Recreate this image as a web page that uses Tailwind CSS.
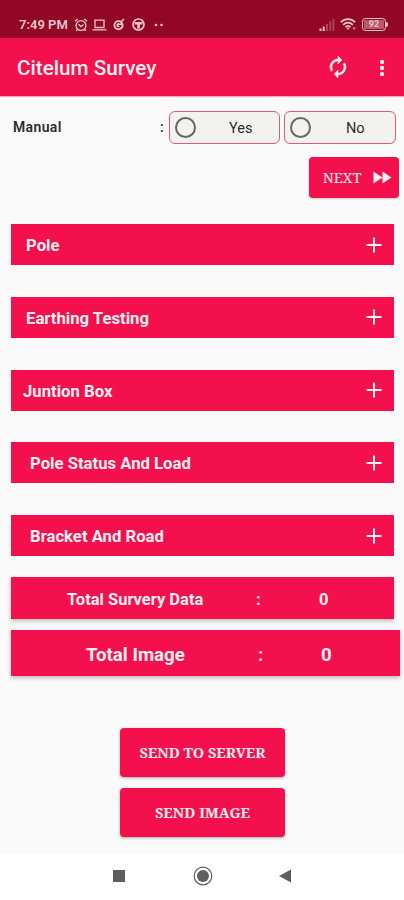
<!DOCTYPE html>
<html lang="en">
<head>
    <meta charset="UTF-8">
    <meta name="viewport" content="width=device-width, initial-scale=1.0">
    <title>Citelum Survey</title>
    <script src="https://cdn.jsdelivr.net/npm/@tailwindcss/browser@4"></script>
</head>
<body class="bg-[#fafafa] font-[Roboto,sans-serif]">
    <div class="w-[404px] h-[900px] flex flex-col overflow-hidden">
        <!-- Status Bar -->
        <div class="h-[38px] shrink-0 bg-[#920724] text-[#eec4cc] flex items-center pt-[11px] pl-[19px] pr-4">
            <span class="w-[49px] text-[13px] leading-4 font-semibold whitespace-nowrap">7:49 PM</span>
            <svg class="w-[14px] h-[14px] ml-[6px]" viewBox="0 0 14 14" fill="none" stroke="currentColor" stroke-width="1.3">
                <circle cx="7" cy="7.5" r="4.9"/>
                <path d="M1 3.2L3.6 1M13 3.2L10.4 1M4.6 6.2L7 8.6l2.6-2.2M3.4 11.4L2.4 13M10.6 11.4l1 1.6"/>
            </svg>
            <svg class="w-[15px] h-[12px] ml-[4px]" viewBox="0 0 15 12" fill="none" stroke="currentColor" stroke-width="1.3">
                <path d="M3 1.2h9v7.3H3zM.5 10.8h14"/>
            </svg>
            <svg class="w-[12px] h-[13px] ml-[6px]" viewBox="0 0 12 13">
                <circle cx="5.5" cy="7.2" r="5" fill="currentColor"/>
                <path d="M7.4 5.4A2.6 2.6 0 1 0 8 7.6H5.6" fill="none" stroke="#920724" stroke-width="1.2"/>
                <path d="M8 4L11 1" stroke="currentColor" stroke-width="1.6"/>
            </svg>
            <svg class="w-[13px] h-[13px] ml-[7px]" viewBox="0 0 13 13">
                <circle cx="6.5" cy="6.5" r="5.5" fill="none" stroke="currentColor" stroke-width="1.7"/>
                <path d="M2.500 4h8v2.400h-8zM5.300 6h2.600v4.500H5.300z" fill="currentColor"/>
            </svg>
            <svg class="w-[10px] h-[4px] ml-[9px]" viewBox="0 0 10 4" fill="currentColor">
                <circle cx="2" cy="2" r="1.3"/>
                <circle cx="7.5" cy="2" r="1.3"/>
            </svg>
            <svg class="w-[16px] h-[12px] ml-auto" viewBox="0 0 16 12" fill="currentColor">
                <path d="M.5 9.5h2V12h-2zM3.7 7.5h2V12h-2z"/>
                <path d="M7 5h2v7H7zM10.2 2.5h2V12h-2zM13.4 0h2v12h-2z" opacity=".3"/>
            </svg>
            <svg class="w-[17px] h-[13px] ml-[5px]" viewBox="0 0 17 13" fill="none" stroke="currentColor" stroke-width="1.7">
                <path d="M.8 4.2c4-4.2 10.400-4.200 14.400 0M3.200 6.800c2.800-2.900 6.800-2.900 9.600 0M5.500 9.200c1.500-1.500 3.500-1.500 5 0"/>
                <path d="M6.400 9.700L8 12l1.600-2.300z" fill="currentColor" stroke="none"/>
                <path d="M13 9l1.200 2.500L15.400 9" stroke-width="1" opacity=".7"/>
            </svg>
            <div class="ml-[5px] flex items-center">
                <div class="w-[24px] h-[13px] rounded-[3.5px] border-[1.500px] border-current p-px">
                    <div class="h-full bg-[#f3d3d9]/40 rounded-[1px] flex items-center justify-center text-[9px] leading-none font-bold">92</div>
                </div>
                <div class="w-[2px] h-[5px] rounded-r bg-current"></div>
            </div>
        </div>

        <!-- App Bar -->
        <header class="h-[58px] shrink-0 bg-[#f3104c] text-[#fff0f2] flex items-center pl-[17px] pr-[19px] pt-[2px] shadow-[0_1px_1px_#f9a9bd]">
            <h1 class="pt-[2px] text-[20.700px] font-medium whitespace-nowrap">Citelum Survey</h1>
            <svg class="w-[24px] h-[24px] mb-[2px] ml-auto" viewBox="0 0 24 24" fill="currentColor" stroke="currentColor" stroke-width=".5">
                <path d="M12 6v3l4-4-4-4v3c-4.420 0-8 3.580-8 8 0 1.570.46 3.030 1.240 4.260L6.700 14.800c-.45-.83-.7-1.790-.7-2.800 0-3.310 2.690-6 6-6zm6.760 1.740L17.300 9.200c.44.84.7 1.790.7 2.800 0 3.310-2.690 6-6 6v-3l-4 4 4 4v-3c4.420 0 8-3.580 8-8 0-1.570-.46-3.030-1.240-4.260z"/>
            </svg>
            <svg class="w-[6px] h-[18px] mb-[1px] ml-[29px]" viewBox="0 0 6 18" fill="currentColor">
                <circle cx="3" cy="2.900" r="2.200"/>
                <circle cx="3" cy="9" r="2.200"/>
                <circle cx="3" cy="15.100" r="2.200"/>
            </svg>
        </header>

        <!-- Main Content -->
        <main class="h-[758px] shrink-0 flex flex-col">
            <!-- Manual -->
            <div class="mt-[15px] h-[33px] flex items-center pl-[13px] text-[#2b2b2b]">
                <span class="w-[147px] text-[14px] font-semibold tracking-[0.35px]">Manual</span>
                <span class="w-[9px] text-[14px] font-medium">:</span>
                <label class="w-[111px] h-[33px] shrink-0 bg-[#f2f3ee] border border-[#dc5a7c] rounded-[6px] flex items-center pl-[5px]">
                    <span class="w-[21px] h-[21px] rounded-full border-2 border-[#666]"></span>
                    <span class="pt-[2px] ml-[33px] text-[14.500px]">Yes</span>
                </label>
                <label class="w-[112px] h-[33px] ml-[4px] shrink-0 bg-[#f2f3ee] border border-[#dc5a7c] rounded-[6px] flex items-center pl-[5px]">
                    <span class="w-[21px] h-[21px] rounded-full border-2 border-[#666]"></span>
                    <span class="pt-[2px] ml-[35px] text-[14.500px]">No</span>
                </label>
            </div>

            <button class="mt-[13px] ml-[309px] w-[90px] h-[41px] shrink-0 rounded-[4px] bg-[#f3104c] text-[#ffeef1] flex items-center pl-[13px] shadow-[0_1px_2px_#0003]">
                <span class="w-[40px] text-[14.500px] whitespace-nowrap font-['Noto_Serif','DejaVu_Serif_Condensed','DejaVu_Serif',serif]">NEXT</span>
                <svg class="w-[19px] h-[13px] ml-[11px]" viewBox="0 0 19 13" fill="currentColor">
                    <path d="M.5.500L9.500 6.500.5 12.500zM9.500.500L18.500 6.500 9.500 12.500z"/>
                </svg>
            </button>

            <!-- Sections -->
            <div class="mt-[26px] mx-[11px] w-[383px] flex flex-col gap-[31.800px] text-[#ffeff2] text-[16.700px] font-bold">
                <div class="h-[41px] bg-[#f3104c] flex items-center justify-between pl-[15px] pr-[12px]">
                    <span class="pt-[2px]">Pole</span>
                    <svg class="w-[16px] h-[16px]" viewBox="0 0 16 16" stroke="currentColor" stroke-width="2"><path d="M8 .5v15M.5 8h15"/></svg>
                </div>
                <div class="h-[41px] bg-[#f3104c] flex items-center justify-between pl-[15px] pr-[12px]">
                    <span class="pt-[2px]">Earthing Testing</span>
                    <svg class="w-[16px] h-[16px]" viewBox="0 0 16 16" stroke="currentColor" stroke-width="2"><path d="M8 .5v15M.5 8h15"/></svg>
                </div>
                <div class="h-[41px] bg-[#f3104c] flex items-center justify-between pl-[12px] pr-[12px]">
                    <span class="pt-[2px]">Juntion Box</span>
                    <svg class="w-[16px] h-[16px]" viewBox="0 0 16 16" stroke="currentColor" stroke-width="2"><path d="M8 .5v15M.5 8h15"/></svg>
                </div>
                <div class="h-[41px] bg-[#f3104c] flex items-center justify-between pl-[19px] pr-[12px]">
                    <span class="pt-[2px]">Pole Status And Load</span>
                    <svg class="w-[16px] h-[16px]" viewBox="0 0 16 16" stroke="currentColor" stroke-width="2"><path d="M8 .5v15M.5 8h15"/></svg>
                </div>
                <div class="h-[41px] bg-[#f3104c] flex items-center justify-between pl-[19px] pr-[12px]">
                    <span class="pt-[2px]">Bracket And Road</span>
                    <svg class="w-[16px] h-[16px]" viewBox="0 0 16 16" stroke="currentColor" stroke-width="2"><path d="M8 .5v15M.5 8h15"/></svg>
                </div>
            </div>

            <!-- Totals -->
            <div class="mt-[21px] ml-[11px] w-[383px] h-[42px] shrink-0 bg-[#f3104c] text-[#ffeff2] text-[16.500px] font-bold flex items-center pl-[56px] pt-[4px] shadow-[0_2px_4px_#0004]">
                <span class="w-[189px]">Total Survery Data</span>
                <span class="w-[63px]">:</span>
                <span>0</span>
            </div>
            <div class="mt-[11px] ml-[11px] w-[389px] h-[46px] shrink-0 bg-[#f3104c] text-[#ffeff2] text-[18.700px] font-bold flex items-center pl-[75px] pt-[3px] shadow-[0_2px_4px_#0004]">
                <span class="w-[172px]">Total Image</span>
                <span class="w-[63px]">:</span>
                <span>0</span>
            </div>

            <!-- Send Buttons -->
            <div class="mt-[52px] ml-[120px] w-[165px] flex flex-col gap-[11px] text-[14.500px] text-[#ffeef1] font-bold font-['Noto_Serif','DejaVu_Serif_Condensed','DejaVu_Serif',serif]">
                <button class="h-[49px] pt-px rounded-[4px] bg-[#f3104c] shadow-[0_1px_3px_#0005] whitespace-nowrap">SEND TO SERVER</button>
                <button class="h-[49px] pt-px rounded-[4px] bg-[#f3104c] shadow-[0_1px_3px_#0005] whitespace-nowrap">SEND IMAGE</button>
            </div>
        </main>

        <!-- Navigation Bar -->
        <nav class="h-[46px] shrink-0 bg-white text-[#5f5f5f] flex items-center pl-[113px] pb-[2px]">
            <div class="w-[12px] h-[12px] bg-current"></div>
            <svg class="w-[20px] h-[20px] ml-[68px]" viewBox="0 0 20 20">
                <circle cx="10" cy="10" r="8.800" fill="none" stroke="currentColor" stroke-width="1.200"/>
                <circle cx="10" cy="10" r="6" fill="currentColor"/>
            </svg>
            <svg class="w-[12px] h-[14px] ml-[66px]" viewBox="0 0 12 14" fill="currentColor"><path d="M0 7L12 .5v13z"/></svg>
        </nav>
    </div>
</body>
</html>
